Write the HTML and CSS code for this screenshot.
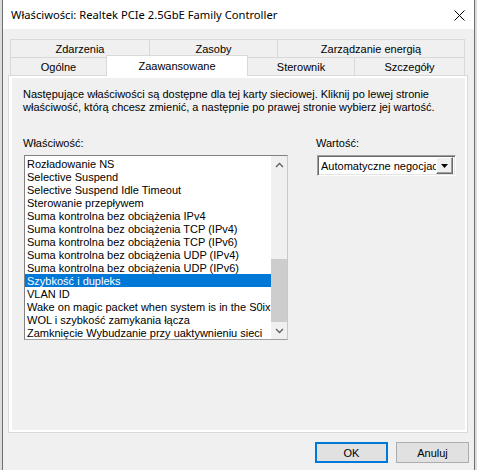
FILE: index.html
```html
<!DOCTYPE html>
<html lang="pl">
<head>
<meta charset="utf-8">
<link rel="stylesheet" href="styles.css">
</head>
<body>
<div class="window">
  <div class="titlebar">
    <span class="title">Właściwości: Realtek PCIe 2.5GbE Family Controller</span>
    <svg class="close" width="11" height="11" viewBox="0 0 11 11"><path d="M0.5 0.5 L10.5 10.5 M10.5 0.5 L0.5 10.5" stroke="#000" stroke-width="1" fill="none"/></svg>
  </div>
  <div class="body">
    <div class="tabs">
      <div class="tabrow">
        <div class="tab t-zd">Zdarzenia</div>
        <div class="tab t-za">Zasoby</div>
        <div class="tab t-ze last">Zarządzanie energią</div>
      </div>
      <div class="tabrow">
        <div class="tab t-og">Ogólne</div>
        <div class="tab t-zaw selected">Zaawansowane</div>
        <div class="tab t-st">Sterownik</div>
        <div class="tab t-sz last">Szczegóły</div>
      </div>
    </div>
    <div class="pane">
      <div class="page">
        <p class="desc">Następujące właściwości są dostępne dla tej karty sieciowej. Kliknij po lewej stronie<br>właściwość, którą chcesz zmienić, a następnie po prawej stronie wybierz jej wartość.</p>
        <div class="cols">
          <div class="col-left">
            <div class="label">Właściwość:</div>
            <div class="listbox">
              <ul class="items">
                <li>Rozładowanie NS</li>
                <li>Selective Suspend</li>
                <li>Selective Suspend Idle Timeout</li>
                <li>Sterowanie przepływem</li>
                <li>Suma kontrolna bez obciążenia IPv4</li>
                <li>Suma kontrolna bez obciążenia TCP (IPv4)</li>
                <li>Suma kontrolna bez obciążenia TCP (IPv6)</li>
                <li>Suma kontrolna bez obciążenia UDP (IPv4)</li>
                <li>Suma kontrolna bez obciążenia UDP (IPv6)</li>
                <li class="sel">Szybkość i dupleks</li>
                <li>VLAN ID</li>
                <li>Wake on magic packet when system is in the S0ix p</li>
                <li>WOL i szybkość zamykania łącza</li>
                <li>Zamknięcie Wybudzanie przy uaktywnieniu sieci</li>
              </ul>
              <div class="scrollbar">
                <div class="sb-btn">
                  <svg width="9" height="6" viewBox="0 0 9 6"><path d="M1 5 L4.5 1.5 L8 5" stroke="#606060" stroke-width="1.3" fill="none"/></svg>
                </div>
                <div class="sb-track"></div>
                <div class="sb-thumb"></div>
                <div class="sb-btn">
                  <svg width="9" height="6" viewBox="0 0 9 6"><path d="M1 1 L4.5 4.5 L8 1" stroke="#606060" stroke-width="1.3" fill="none"/></svg>
                </div>
              </div>
            </div>
          </div>
          <div class="col-right">
            <div class="label">Wartość:</div>
            <div class="combo">
              <span class="combo-text">Automatyczne negocjac</span>
              <span class="combo-btn">
                <svg width="7" height="4" viewBox="0 0 7 4"><path d="M0 0 H7 L3.5 4 Z" fill="#000"/></svg>
              </span>
            </div>
          </div>
        </div>
      </div>
    </div>
    <div class="buttons">
      <button class="btn default">OK</button>
      <button class="btn">Anuluj</button>
    </div>
  </div>
</div>
</body>
</html>
```
FILE: styles.css
```css
html, body {
  margin: 0;
  padding: 0;
}
body {
  background: #dcdcdc;
  width: 477px;
  height: 470px;
  overflow: hidden;
  font-family: "Liberation Sans", Arial, sans-serif;
  font-size: 11px;
  color: #000;
}
.window {
  box-sizing: border-box;
  margin-left: 2px;
  width: 473px;
  height: 470px;
  border-left: 1px solid #6e6e6e;
  border-right: 1px solid #6e6e6e;
  background: #f0f0f0;
  display: flex;
  flex-direction: column;
}
.titlebar {
  height: 29px;
  background: #fff;
  display: flex;
  align-items: center;
  justify-content: space-between;
  padding: 0 9px 0 8px;
}
.title {
  font-family: "Noto Sans", "Open Sans", sans-serif;
  font-size: 11.2px;
  color: #000;
  padding-bottom: 1px;
}
.close {
  display: block;
  margin-top: 1px;
}
.body {
  display: flex;
  flex-direction: column;
}
.tabs {
  margin: 10px 0 0 7px;
  display: flex;
  flex-direction: column;
}
.tabrow {
  display: flex;
  height: 18px;
}
.tab {
  box-sizing: border-box;
  height: 18px;
  border-top: 1px solid #d9d9d9;
  border-left: 1px solid #d9d9d9;
  background: #f0f0f0;
  display: flex;
  align-items: center;
  justify-content: center;
  white-space: nowrap;
}
.tab.last {
  border-right: 1px solid #d9d9d9;
}
.t-zd { width: 139px; }
.t-za { width: 128px; }
.t-ze { width: 188px; }
.t-og { width: 96px; }
.t-zaw { width: 142px; }
.t-st { width: 106px; border-left: none; }
.t-sz { width: 111px; }
.tab.selected {
  position: relative;
  z-index: 1;
  height: 21px;
  margin-top: -2px;
  margin-bottom: -1px;
  background: #fff;
  border-right: 1px solid #d9d9d9;
  padding-bottom: 1px;
}
.pane {
  box-sizing: border-box;
  margin-left: 5px;
  width: 460px;
  height: 358px;
  border: 1px solid #d9d9d9;
  background: #fff;
  padding: 2px 2px 2px 3px;
  display: flex;
}
.page {
  flex: 1;
  background: #f0f0f0;
  padding: 10px 0 0 11px;
}
.desc {
  margin: 0;
  line-height: 13px;
  white-space: nowrap;
}
.cols {
  margin-top: 23px;
  display: flex;
}
.col-left {
  width: 265px;
}
.col-right {
  margin-left: 28px;
}
.label {
  line-height: 13px;
  height: 13px;
  margin-bottom: 5px;
}
.listbox {
  box-sizing: border-box;
  margin-left: 1px;
  width: 264px;
  height: 185px;
  border: 1px solid #828282;
  border-right-color: #c8c8c8;
  border-bottom-color: #a0a0a0;
  background: #fff;
  display: flex;
}
.items {
  list-style: none;
  margin: 0;
  padding: 1px 0 0 0;
  flex: 1;
  min-width: 0;
  overflow: hidden;
}
.items li {
  box-sizing: border-box;
  height: 13px;
  line-height: 13px;
  padding-left: 2px;
  padding-top: 1px;
  white-space: nowrap;
  overflow: hidden;
}
.items li.sel {
  background: #0078d7;
  color: #fff;
}
.scrollbar {
  width: 16px;
  background: #f0f0f0;
  display: flex;
  flex-direction: column;
}
.sb-btn {
  height: 17px;
  display: flex;
  align-items: center;
  justify-content: center;
}
.sb-track {
  flex: 1;
}
.sb-thumb {
  height: 63px;
  background: #cdcdcd;
}
.combo {
  box-sizing: border-box;
  margin-left: 1px;
  width: 139px;
  height: 21px;
  border-top: 1px solid #a0a0a0;
  border-left: 1px solid #a0a0a0;
  border-right: 1px solid #fff;
  border-bottom: 1px solid #fff;
  box-shadow: inset 1px 1px 0 #696969, inset -1px -1px 0 #e3e3e3;
  background: #fff;
  display: flex;
  align-items: center;
  padding: 2px;
}
.combo-text {
  flex: 1;
  min-width: 0;
  overflow: hidden;
  white-space: nowrap;
  padding-left: 1px;
}
.combo-btn {
  box-sizing: border-box;
  width: 17px;
  height: 17px;
  background: #f0f0f0;
  border-top: 1px solid #fff;
  border-left: 1px solid #fff;
  border-right: 1px solid #696969;
  border-bottom: 1px solid #696969;
  box-shadow: inset -1px -1px 0 #a0a0a0;
  display: flex;
  align-items: center;
  justify-content: center;
}
.buttons {
  display: flex;
  justify-content: flex-end;
  gap: 8px;
  margin-top: 9px;
  padding-right: 5px;
}
.btn {
  box-sizing: border-box;
  width: 73px;
  height: 21px;
  margin: 0;
  padding: 0;
  background: #e1e1e1;
  border: 1px solid #adadad;
  font-family: "Liberation Sans", Arial, sans-serif;
  font-size: 11px;
  color: #000;
}
.btn.default {
  border: 2px solid #0078d7;
}
```
